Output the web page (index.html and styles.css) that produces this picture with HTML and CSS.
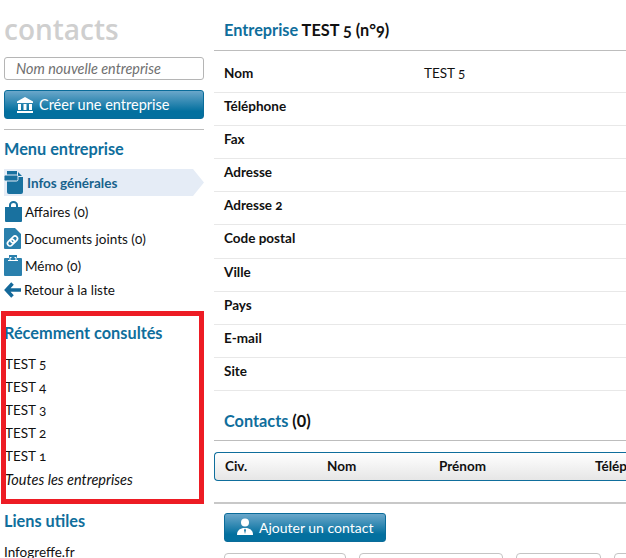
FILE: index.html
```html
<!DOCTYPE html>
<html lang="fr">
<head>
  <meta charset="utf-8">
  <title>Contacts</title>
  <link rel="stylesheet" href="styles.css">
</head>
<body>
  <!-- SIDEBAR -->
  <div id="side">
    <div class="logo">contacts</div>
    <input class="new-name" type="text" placeholder="Nom nouvelle entreprise">
    <a class="btn btn-wide">
      <svg class="btn-icon" viewBox="0 0 18 18"><path d="M9 1 17 5.500V7H1V5.500ZM2 8h3v6H2ZM7.500 8h3v6h-3ZM13 8h3v6h-3ZM1 15h16v2H1Z" fill="#fff"/></svg>
      Créer une entreprise
    </a>
    <hr class="rule">

    <h2>Menu entreprise</h2>
    <ul class="menu">
      <li class="active">
        <svg class="ico" width="19" height="23" viewBox="0 0 19 23"><path d="M3 0h10l6 6v15a2 2 0 0 1-2 2H5a2 2 0 0 1-2-2Z" fill="#19719f"/><path d="M13.500 0v5.500H19" fill="none" stroke="#e5ecf6"/><rect x="0" y="4" width="14" height="6" rx="1.500" fill="#19719f" stroke="#e5ecf6"/></svg>
        Infos générales
      </li>
      <li class="m-affaires">
        <svg class="ico" width="17" height="21" viewBox="0 0 17 21"><path d="M4 6V4a4.500 4 0 0 1 9 0v2h-2V4a2.500 2 0 0 0-5 0v2ZM0 6h17v14a1 1 0 0 1-1 1H1a1 1 0 0 1-1-1Z" fill="#19719f"/></svg>
        Affaires (0)
      </li>
      <li class="m-docs">
        <svg class="ico" width="17" height="21" viewBox="0 0 17 21"><path d="M1 0h10l6 6v14a1 1 0 0 1-1 1H1a1 1 0 0 1-1-1V1a1 1 0 0 1 1-1Z" fill="#2a80ad"/><g transform="rotate(-45 8.500 13)" fill="none" stroke="#fff" stroke-width="1.700"><rect x="2.500" y="10.500" width="7.500" height="5" rx="2.500"/><rect x="7" y="10.500" width="7.500" height="5" rx="2.500"/></g></svg>
        Documents joints (0)
      </li>
      <li class="m-memo">
        <svg class="ico" width="18" height="21" viewBox="0 0 18 21"><path d="M1 3h4V0h8v3h4a1 1 0 0 1 1 1v16a1 1 0 0 1-1 1H1a1 1 0 0 1-1-1V4a1 1 0 0 1 1-1Z" fill="#2a80ad"/><path d="M4 5.500h10M6 5V2.500h1.500M10.500 2.500H12V5" fill="none" stroke="#fff"/></svg>
        Mémo (0)
      </li>
      <li class="m-back">
        <svg class="ico" width="17" height="16" viewBox="0 0 17 16"><path d="M8.500 1.500 2.500 8l6 6.500M3 8h14" fill="none" stroke="#14699a" stroke-width="3.500"/></svg>
        Retour à la liste
      </li>
    </ul>

    <h2 class="recent-title">Récemment consultés</h2>
    <ul class="recent">
      <li>TEST 5</li>
      <li>TEST 4</li>
      <li>TEST 3</li>
      <li>TEST 2</li>
      <li>TEST 1</li>
      <li><em>Toutes les entreprises</em></li>
    </ul>

    <h2 class="links-title">Liens utiles</h2>
    <div class="link">Infogreffe.fr</div>
  </div>

  <!-- red annotation over the sidebar -->
  <div class="marker"></div>

  <!-- MAIN -->
  <div id="main">
    <h1><span>Entreprise</span> TEST 5 (n°9)</h1>
    <div class="fields">
      <div class="field"><b>Nom</b><span>TEST 5</span></div>
      <div class="field"><b>Téléphone</b></div>
      <div class="field"><b>Fax</b></div>
      <div class="field"><b>Adresse</b></div>
      <div class="field"><b>Adresse 2</b></div>
      <div class="field"><b>Code postal</b></div>
      <div class="field"><b>Ville</b></div>
      <div class="field"><b>Pays</b></div>
      <div class="field"><b>E-mail</b></div>
      <div class="field"><b>Site</b></div>
    </div>

    <h1 class="contacts-title"><span>Contacts</span> (0)</h1>
    <div class="thead">
      <div class="th-civ">Civ.</div>
      <div class="th-nom">Nom</div>
      <div class="th-prenom">Prénom</div>
      <div>Téléphone</div>
    </div>
    <hr class="rule rule-low">
    <a class="btn btn-add">
      <svg class="btn-icon" viewBox="0 0 18 18"><circle cx="9" cy="4.500" r="4" fill="#fff"/><path d="M1 17c0-4 2-6 6-7h4c4 1 6 3 6 7Z" fill="#fff"/><path d="M9 10.500 8 12l1 4 1-4Z" fill="#1a78a6"/></svg>
      Ajouter un contact
    </a>
    <div class="actions">
      <div class="act act1"></div>
      <div class="act act2"></div>
      <div class="act act3"></div>
      <div class="act act4"></div>
    </div>
  </div>
</body>
</html>
```

FILE: styles.css
```css
/* --- Layout & Basics --- */
*{box-sizing:border-box}
html,body{height:100%}
body{margin:0;width:626px;height:558px;overflow:hidden;display:flex;font-family:Lato,sans-serif;font-size:13.500px;font-variant-numeric:oldstyle-nums;color:#111;background:#fff;position:relative}
ul{list-style:none;margin:0;padding:0}

/* --- Sidebar --- */
#side{flex:none;width:200px;margin-left:4px}
.logo{height:57px;padding-top:9px;font-family:"Open Sans",sans-serif;font-size:28px;line-height:40px;font-weight:600;color:#cfcfcf}
.new-name{display:block;width:100%;height:23px;border:1px solid #b5b5b5;border-radius:3px;padding:0 11px;font:italic 14.400px Lato,sans-serif;background:#fff}
.new-name::placeholder{color:#6f6f6f;opacity:1}
.btn{display:flex;align-items:center;gap:5px;height:29px;border-radius:3px;color:#fff;font-size:14.500px;background:linear-gradient(#6ba7ca,#03709f 75%);border:1px solid #0a6c9a}
.btn-wide{margin-top:10px;padding-left:11px}
.btn-icon{width:18px;height:18px;flex:none}
.rule{border:0;border-top:1px solid #bdbdbd;margin:0}
#side .rule{margin-top:10px}
h2{margin:0;font-size:16.300px;line-height:22px;font-weight:700;color:#0f6e9c}
#side>h2:first-of-type{margin-top:8px}

/* --- Menu --- */
.menu{margin-top:9px}
.menu li{display:flex;align-items:center;gap:3px}
.menu .active{height:27px;gap:4px;margin-bottom:2px;font-weight:700;color:#17628c;background:#e5ecf6;clip-path:polygon(0 0,189px 0,200px 50%,189px 100%,0 100%)}
.m-affaires{height:27px;padding-left:1px}
.m-docs{height:27px}
.m-memo{height:27px}
.m-back{height:22px}

/* --- Recent --- */
.recent-title{margin-top:21px}
.recent{margin-top:9px;margin-left:1px}
.recent li{height:23px;line-height:23px}
.recent em{font-size:14.500px}
.links-title{margin-top:19px}
.link{margin-top:12px}
.marker{position:absolute;left:1px;top:311px;width:203px;height:193px;border:5px solid #ed1c24}

/* --- Main --- */
#main{flex:none;width:412px;margin-left:10px}
h1{margin:0;height:51px;padding:19px 10px 0;font-size:16.300px;line-height:22px;font-weight:700;color:#111;border-bottom:1px solid #bdbdbd}
h1 span{color:#0f6e9c}
.fields{padding-top:9px}
.field{display:flex;align-items:flex-start;height:33.100px;padding:4px 0 0 10px;line-height:18px;border-bottom:1px solid #e8e8e8}
.field b{flex:none;width:200px}
.contacts-title{height:50px;padding-top:19px;font-variant-numeric:lining-nums}
.thead{display:flex;align-items:center;height:29px;margin-top:11px;padding-left:10px;width:420px;font-weight:700;border:1px solid #0f6e9c;border-right:0;border-radius:4px 0 0 4px;background:linear-gradient(#fff,#e6e6e6);white-space:nowrap}
.thead div{flex:none}
.th-civ{width:102px}
.th-nom{width:112px}
.th-prenom{width:156px}
.rule-low{margin-top:21px;border-top-width:2px;border-top-color:#c8c8c8}
.btn-add{width:162px;height:29px;margin-top:9px;margin-left:10px;padding-left:11px;gap:5px;font-size:14px}
.actions{display:flex;gap:13px;margin-top:11px;margin-left:10px;width:500px}
.act{flex:none;height:24px;border:1px solid #c4c4c4;border-radius:4px}
.act1{width:122px}
.act2{width:144px}
.act3{width:85px}
.act4{width:60px}
```
